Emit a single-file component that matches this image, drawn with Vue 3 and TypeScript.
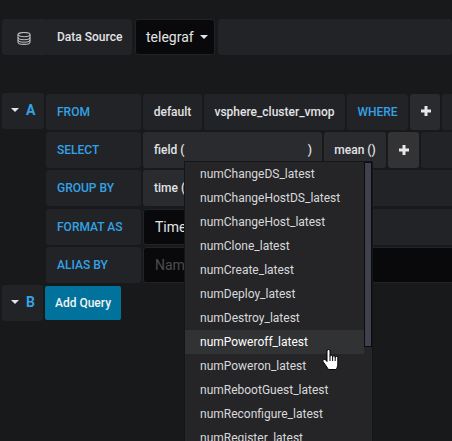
<script setup lang="ts">
const fields: string[] = [
  'numChangeDS_latest',
  'numChangeHostDS_latest',
  'numChangeHost_latest',
  'numClone_latest',
  'numCreate_latest',
  'numDeploy_latest',
  'numDestroy_latest',
  'numPoweroff_latest',
  'numPoweron_latest',
  'numRebootGuest_latest',
  'numReconfigure_latest',
  'numRegister_latest',
]
const hovered = 'numPoweroff_latest'
</script>

<template>
  <div class="page">
    <div class="row ds-row">
      <div class="cell ds-icon">
        <svg width="14" height="13" viewBox="0 0 14 13" fill="none" stroke="#b9babb" stroke-width="1.1">
          <ellipse cx="7" cy="2.600" rx="6" ry="2.100" />
          <path d="M1 2.600v7.400c0 1.300 2.700 2.400 6 2.400s6-1.100 6-2.400V2.600" />
          <path d="M1 5.300c0 1.300 2.700 2.400 6 2.400s6-1.100 6-2.400" />
          <path d="M1 7.800c0 1.300 2.700 2.400 6 2.400s6-1.100 6-2.400" />
        </svg>
      </div>
      <div class="cell ds-label">Data Source</div>
      <div class="cell ds-select">telegraf <span class="caret"></span></div>
      <div class="cell grow"></div>
    </div>

    <div class="query">
      <div class="cell toggle"><span class="caret"></span><span class="letter">A</span></div>
      <div class="rows">
        <div class="row">
          <div class="cell label">FROM</div>
          <div class="cell val w-default">default</div>
          <div class="cell val w-table">vsphere_cluster_vmop</div>
          <div class="cell label w-where">WHERE</div>
          <div class="cell plus w-plus1">
            <svg width="10" height="10" viewBox="0 0 10 10"><path d="M3.500 0h3v3.500H10v3H6.500V10h-3V6.500H0v-3h3.500z" fill="#e6e7e8" /></svg>
          </div>
          <div class="cell grow"></div>
        </div>
        <div class="row">
          <div class="cell label">SELECT</div>
          <div class="cell val light w-field"><span>field (</span><span>)</span></div>
          <div class="cell val light w-mean">mean ()</div>
          <div class="cell plus w-plus2">
            <svg width="10" height="10" viewBox="0 0 10 10"><path d="M3.500 0h3v3.500H10v3H6.500V10h-3V6.500H0v-3h3.500z" fill="#e6e7e8" /></svg>
          </div>
          <div class="cell grow"></div>
        </div>
        <div class="row">
          <div class="cell label">GROUP BY</div>
          <div class="cell val light w-time">time (</div>
          <div class="cell grow"></div>
        </div>
        <div class="row format-row">
          <div class="cell label">FORMAT AS</div>
          <div class="cell black">Time series</div>
          <div class="cell grow"></div>
        </div>
        <div class="row">
          <div class="cell label">ALIAS BY</div>
          <div class="cell black muted grow">Naming pattern</div>
        </div>
      </div>
    </div>

    <div class="query-b">
      <div class="cell toggle b"><span class="caret"></span><span class="letter">B</span></div>
      <button class="add">Add Query</button>
    </div>

    <div class="menu">
      <ul>
        <li v-for="f in fields" :key="f" :class="{ on: f === hovered }">{{ f }}</li>
      </ul>
      <div class="thumb"></div>
    </div>

    <svg class="hand" width="18" height="22" viewBox="0 0 18 22">
      <path
        d="M5 2a1.500 1.500 0 0 1 3 0V7.500a1.300 1.300 0 0 1 2.600 0V8a1.300 1.300 0 0 1 2.600 0v.7a1.300 1.300 0 0 1 2.600 0V15c0 2.500-1 4-1.500 5.500H6.500C5 18 3 15.500 1.300 13 .5 11.800 1 10.700 2 10.500c1-.2 2 .5 3 2z"
        fill="#fff"
        stroke="#000"
        stroke-width="1"
      />
      <path d="M8 7.500V12M10.600 8V12M13.200 8.700V12" stroke="#000" stroke-width="1" fill="none" />
    </svg>
  </div>
</template>

<style>
html,
body {
  margin: 0;
  background: #18191b;
}
</style>

<style scoped>
.page {
  position: relative;
  width: 452px;
  height: 441px;
  overflow: hidden;
  background: #18191b;
  font-family: Roboto, 'Liberation Sans', sans-serif;
  font-size: 12px;
  font-weight: 500;
  color: #e3e4e5;
  padding: 19px 0 0 2px;
  box-sizing: border-box;
}
.row {
  display: flex;
  gap: 2px;
  height: 36px;
}
.format-row {
  margin-top: 1px;
}
.cell {
  display: flex;
  align-items: center;
  background: #222327;
  border-radius: 3px;
  padding: 0 11px;
  box-sizing: border-box;
  flex: none;
  white-space: nowrap;
}
.grow {
  flex: 1;
}
.ds-row {
  margin-bottom: 39px;
}
.ds-icon {
  width: 44px;
  justify-content: center;
  padding: 2px 0 0;
  border-radius: 3px 0 0 3px;
}
.ds-label {
  width: 86px;
  margin-left: -2px;
}
.ds-select {
  width: 80px;
  margin-left: 1px;
  margin-right: 1px;
  padding-left: 10px;
  background: #09090b;
  border: 1px solid #222327;
  font-size: 14px;
  font-weight: 400;
  gap: 6px;
}
.caret {
  display: inline-block;
  width: 0;
  height: 0;
  border-left: 4px solid transparent;
  border-right: 4px solid transparent;
  border-top: 4px solid #e3e4e5;
}
.query {
  display: flex;
  gap: 2px;
  align-items: flex-start;
}
.toggle {
  width: 42px;
  height: 36px;
  gap: 7px;
  padding: 0 0 2px 9px;
  margin-top: -1px;
}
.letter {
  color: #33a2e5;
  font-size: 14px;
  font-weight: 700;
}
.rows {
  flex: 1;
  display: flex;
  flex-direction: column;
  gap: 2px;
}
.label {
  width: 95px;
  color: #33a2e5;
  font-weight: 500;
}
.val {
  justify-content: center;
  padding: 0;
}
.light {
  background: #2a2b2f;
}
.w-default {
  width: 59px;
}
.w-table {
  width: 141px;
}
.w-where {
  width: 61px;
  justify-content: center;
  padding: 0;
}
.w-plus1 {
  width: 30px;
  padding: 0 0 2px 1px;
  background: #2a2b2f;
}
.w-plus2 {
  width: 31px;
  padding: 0 0 1px 1px;
  background: #333335;
}
.plus {
  justify-content: center;
}
.w-field {
  width: 179px;
  justify-content: space-between;
  padding: 0 10px 0 11px;
}
.w-mean {
  width: 62px;
}
.w-time {
  width: 179px;
  justify-content: flex-start;
  padding-left: 11px;
}
.black {
  width: 200px;
  background: #09090b;
  border: 1px solid #222327;
  font-size: 14px;
  font-weight: 400;
}
.muted {
  color: #4b4c50;
}
.query-b {
  display: flex;
  align-items: center;
  margin-top: 2px;
  gap: 2px;
}
.b {
  width: 41px;
  margin-top: 0;
}
.add {
  width: 76px;
  height: 34px;
  border: 0;
  border-radius: 2px;
  background: #01729c;
  color: #f2f2f3;
  font: inherit;
  padding: 0;
}
.menu {
  position: absolute;
  left: 184px;
  top: 161px;
  width: 189px;
  height: 290px;
  background: #252528;
  border: 1px solid #141517;
  box-sizing: border-box;
  overflow: hidden;
}
.menu ul {
  list-style: none;
  margin: 0;
  padding: 0;
  width: 179px;
}
.menu li {
  height: 24px;
  line-height: 24px;
  padding-left: 15px;
  font-weight: 400;
  color: #d8d9da;
}
.menu li.on {
  background: #313234;
  color: #fff;
}
.thumb {
  position: absolute;
  right: 0;
  top: 0;
  width: 8px;
  height: 185px;
  background: #40414e;
  border: 1px solid #0c0c0e;
  box-sizing: border-box;
}
.hand {
  position: absolute;
  left: 322px;
  top: 349px;
}
</style>
